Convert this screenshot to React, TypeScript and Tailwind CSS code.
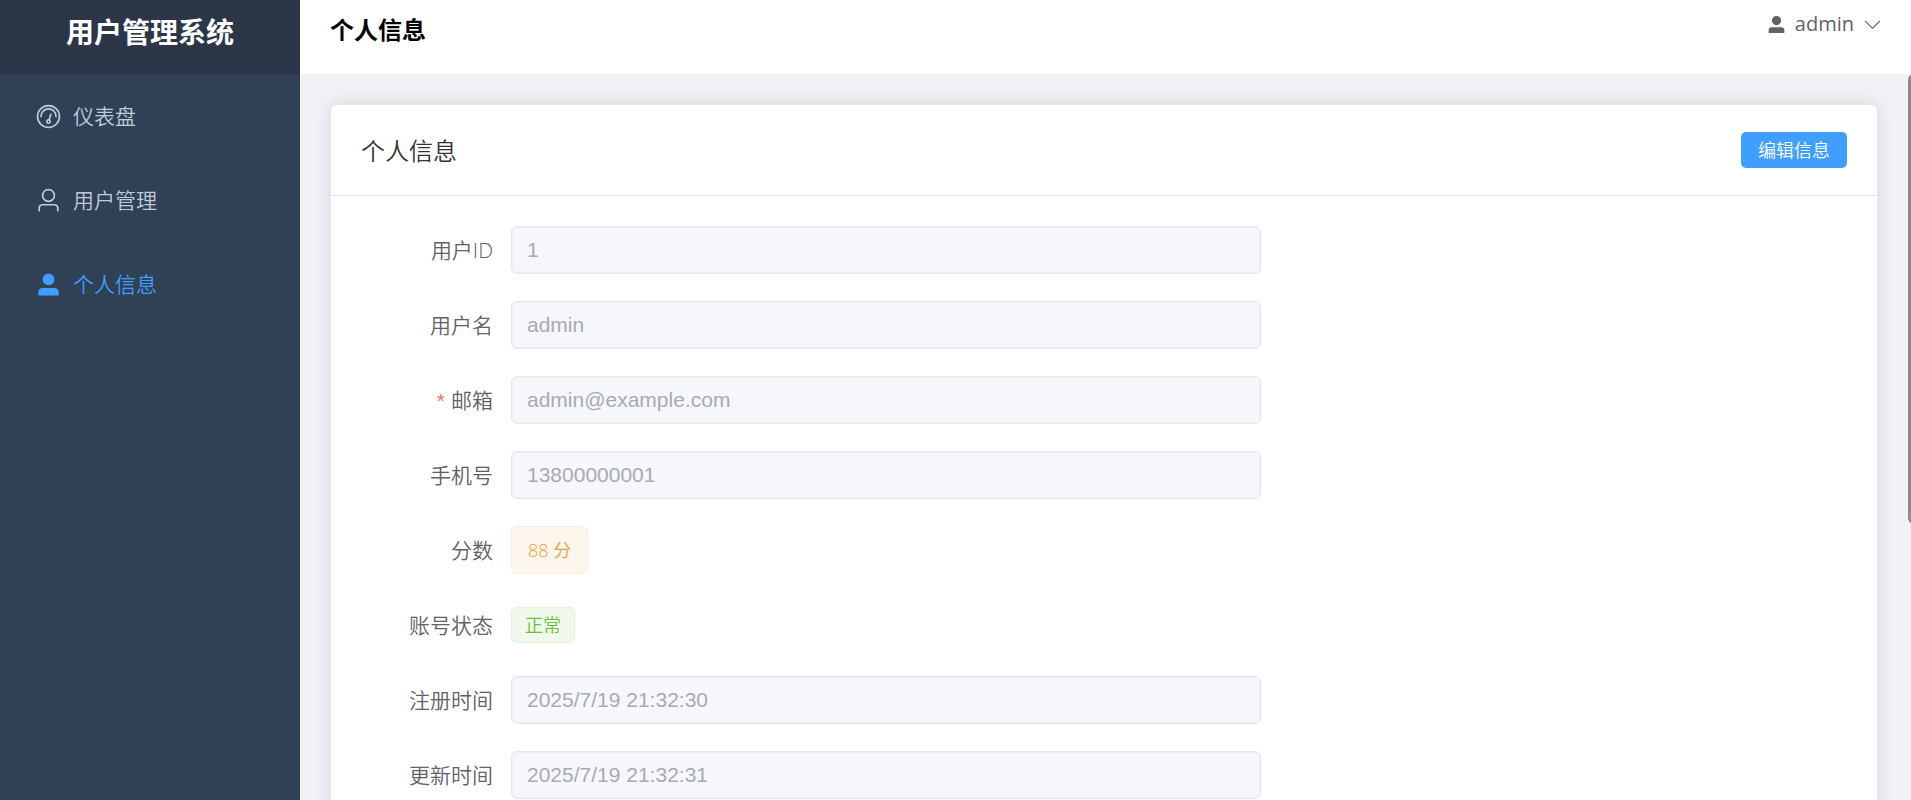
import type { ReactNode } from "react";
import clsx from "clsx";

type IconProps = { className?: string; paths: string[] };

const ICONS = {
  odometer: [
    "M512 896a384 384 0 1 0 0-768 384 384 0 0 0 0 768m0 64a448 448 0 1 1 0-896 448 448 0 0 1 0 896",
    "M192 512a320 320 0 1 1 640 0 32 32 0 1 1-64 0 256 256 0 1 0-512 0 32 32 0 0 1-64 0",
    "M570.432 627.84A96 96 0 1 1 509.568 608l60.992-187.776A32 32 0 1 1 631.424 440l-60.992 187.776zM502.08 734.464a32 32 0 1 0 19.84-60.928 32 32 0 0 0-19.84 60.928",
  ],
  user: [
    "M512 512a192 192 0 1 0 0-384 192 192 0 0 0 0 384m0 64a256 256 0 1 1 0-512 256 256 0 0 1 0 512m320 320v-96a96 96 0 0 0-96-96H288a96 96 0 0 0-96 96v96a32 32 0 1 1-64 0v-96a160 160 0 0 1 160-160h448a160 160 0 0 1 160 160v96a32 32 0 1 1-64 0",
  ],
  userFilled: [
    "M288 320a224 224 0 1 0 448 0 224 224 0 1 0-448 0m544 608H160a32 32 0 0 1-32-32v-96a160 160 0 0 1 160-160h448a160 160 0 0 1 160 160v96a32 32 0 0 1-32 32z",
  ],
  arrowDown: [
    "M831.872 340.864 512 652.672 192.128 340.864a30.592 30.592 0 0 0-42.752 0 29.12 29.12 0 0 0 0 41.6L489.664 714.24a32 32 0 0 0 44.672 0l340.288-331.712a29.12 29.12 0 0 0 0-41.728 30.592 30.592 0 0 0-42.752 0z",
  ],
};

function Icon({ className, paths }: IconProps) {
  return (
    <svg viewBox="0 0 1024 1024" fill="currentColor" aria-hidden="true" className={className}>
      {paths.map((d) => (
        <path key={d} d={d} />
      ))}
    </svg>
  );
}

const MENU = [
  { label: "仪表盘", icon: ICONS.odometer, href: "#dashboard", active: false },
  { label: "用户管理", icon: ICONS.user, href: "#users", active: false },
  { label: "个人信息", icon: ICONS.userFilled, href: "#profile", active: true },
];

function Sidebar() {
  return (
    <aside className="flex w-[300px] shrink-0 flex-col bg-[#304156]">
      <div className="flex h-[74px] shrink-0 justify-center bg-[#2b3648] pt-3 text-[28px] leading-10 font-bold text-white">
        用户管理系统
      </div>
      <nav>
        {MENU.map((item) => (
          <a
            key={item.label}
            href={item.href}
            className={clsx(
              "flex h-[84px] items-center gap-[7px] px-[30px] text-[21px]",
              item.active ? "text-[#409eff]" : "text-[#bfcbd9]",
            )}
          >
            <span className="flex w-9 justify-center">
              <Icon paths={item.icon} className="size-[27px]" />
            </span>
            <span className="pt-[2px]">{item.label}</span>
          </a>
        ))}
      </nav>
    </aside>
  );
}

function Header() {
  return (
    <header className="flex h-[74px] shrink-0 items-start justify-between bg-white pt-3 pr-7 pl-[30px]">
      <h1 className="text-2xl leading-9 font-bold text-black">个人信息</h1>
      <button
        type="button"
        className="flex items-center gap-2 text-[20px] leading-6 font-normal text-[#606266]"
      >
        <Icon paths={ICONS.userFilled} className="size-[21px]" />
        admin
        <Icon paths={ICONS.arrowDown} className="size-[21px]" />
      </button>
    </header>
  );
}

type RowProps = { label: string; id?: string; required?: boolean; children: ReactNode };

function FormRow({ label, id, required, children }: RowProps) {
  const Label = id ? "label" : "span";
  return (
    <div className="flex h-12 items-center">
      <Label
        {...(id ? { htmlFor: id } : {})}
        className="w-[150px] shrink-0 pt-[2px] pr-[18px] text-right text-[21px] text-[#606266]"
      >
        {required && (
          <span className="mr-[6px] font-['Liberation_Sans',sans-serif] font-normal text-[#f56c6c]">*</span>
        )}
        {label}
      </Label>
      {children}
    </div>
  );
}

type FieldProps = { id: string; label: string; value: string; required?: boolean };

function Field({ id, label, value, required }: FieldProps) {
  return (
    <FormRow id={id} label={label} required={required}>
      <input
        id={id}
        value={value}
        disabled
        readOnly
        className="h-12 min-w-0 flex-1 rounded-md border border-[#e4e7ed] bg-[#f5f7fa] px-[15px] font-['Liberation_Sans',sans-serif] text-[21px] font-normal text-[#a8abb2] shadow-[inset_0_0_0_1px_#eceff4]"
      />
    </FormRow>
  );
}

function ProfileCard() {
  return (
    <section className="rounded-md border border-[#e4e7ed] bg-white shadow-[0_0_18px_rgba(0,0,0,0.12)]">
      <div className="flex h-[91px] items-center justify-between border-b border-[#e4e7ed] px-[30px]">
        <h2 className="pt-[2px] text-2xl text-[#303133]">个人信息</h2>
        <button type="button" className="h-9 rounded-[5px] bg-[#409eff] px-[17px] text-lg leading-9 text-white">
          编辑信息
        </button>
      </div>
      <form className="flex max-w-[960px] flex-col gap-[27px] p-[30px]">
        <Field id="user-id" label="用户ID" value="1" />
        <Field id="username" label="用户名" value="admin" />
        <Field id="email" label="邮箱" value="admin@example.com" required />
        <Field id="phone" label="手机号" value="13800000001" />
        <FormRow label="分数">
          <span className="flex h-12 items-center rounded-md border border-[#faecd8] bg-[#fdf6ec] px-4 text-lg text-[#e6a23c]">
            88 分
          </span>
        </FormRow>
        <FormRow label="账号状态">
          <span className="flex h-9 items-center rounded-md border border-[#e1f3d8] bg-[#f0f9eb] px-[13px] text-lg text-[#67c23a]">
            正常
          </span>
        </FormRow>
        <Field id="created-at" label="注册时间" value="2025/7/19 21:32:30" />
        <Field id="updated-at" label="更新时间" value="2025/7/19 21:32:31" />
      </form>
    </section>
  );
}

export default function App() {
  return (
    <div className="flex h-screen overflow-hidden font-['Open_Sans','Noto_Sans_CJK_SC',sans-serif] font-[350]">
      <Sidebar />
      <div className="flex min-w-0 flex-1 flex-col">
        <Header />
        <div className="flex min-h-0 flex-1 bg-[#f0f2f5]">
          <main className="min-w-0 flex-1 overflow-y-auto p-[30px] [scrollbar-width:none]">
            <ProfileCard />
          </main>
          {/* slim scroll track */}
          <div className="w-[3px] shrink-0 overflow-hidden bg-[#f1f1f1]">
            <div className="h-[62%] w-3 rounded-md bg-[#8b8b8b]" />
          </div>
        </div>
      </div>
    </div>
  );
}
